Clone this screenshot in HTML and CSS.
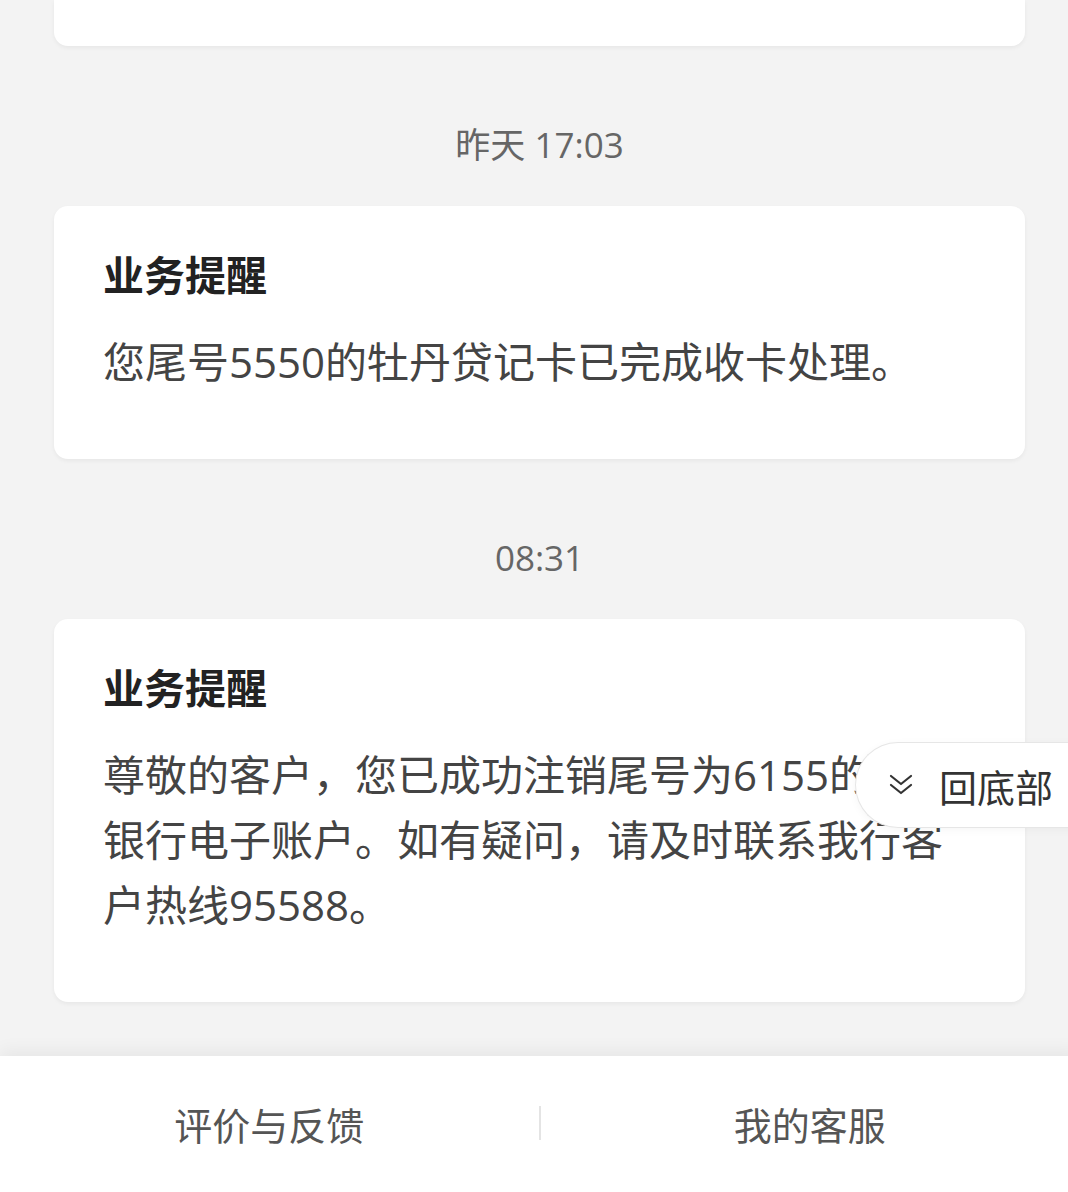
FILE: index.html
```html
<!DOCTYPE html>
<html lang="zh-CN">
<head>
    <meta charset="UTF-8">
    <meta name="viewport" content="width=device-width, initial-scale=1.0">
    <title>业务提醒</title>
    <link rel="stylesheet" href="styles.css">
</head>
<body>

<div class="page">
    <div class="msg-list">
        <div class="card card-cut"></div>

        <div class="time">昨天 17:03</div>
        <div class="card">
            <div class="card-title">业务提醒</div>
            <div class="card-text">您尾号5550的牡丹贷记卡已完成收卡处理。</div>
        </div>

        <div class="time">08:31</div>
        <div class="card">
            <div class="card-title">业务提醒</div>
            <div class="card-text">尊敬的客户，您已成功注销尾号为6155的工商银行电子账户。如有疑问，请及时联系我行客户热线95588。</div>
        </div>
    </div>

    <!-- 回底部 -->
    <div class="to-bottom">
        <svg class="to-bottom-icon" width="28" height="24" viewBox="0 0 28 24">
            <path d="M4 3 L14 11 L24 3 M4 12 L14 20 L24 12" fill="none" stroke="#333" stroke-width="2.2" stroke-linecap="round" stroke-linejoin="round"/>
        </svg>
        <span>回底部</span>
    </div>

    <div class="footer">
        <div class="footer-item">评价与反馈</div>
        <div class="footer-line"></div>
        <div class="footer-item">我的客服</div>
    </div>
</div>

</body>
</html>
```

FILE: styles.css
```css
body {
    margin: 0;
    background-color: #f3f3f3;
    font-family: "Open Sans", "Noto Sans CJK SC", sans-serif;
    color: #333;
    overflow: hidden;
}

.page {
    position: relative;
    width: 1079px;
    height: 100vh;
    display: flex;
    flex-direction: column;
    overflow: hidden;
}

.msg-list {
    flex: 1;
    padding: 0 54px;
    overflow: hidden;
}

.card {
    background: white;
    border-radius: 14px;
    box-shadow: 0 2px 4px rgba(0, 0, 0, 0.05);
    padding: 41px 52px 65px 49px;
}

.card-cut {
    height: 46px;
    padding: 0;
    border-radius: 0 0 14px 14px;
}

.time {
    margin: 79px 0 41px;
    height: 40px;
    line-height: 40px;
    text-align: center;
    font-size: 35px;
    color: #666;
}

.card-title {
    font-size: 41px;
    line-height: 56px;
    font-weight: 700;
    color: #222;
    margin-bottom: 26px;
}

.card-text {
    font-size: 42px;
    line-height: 65px;
    color: #444;
}

.to-bottom {
    position: absolute;
    left: 855px;
    top: 742px;
    width: 260px;
    height: 86px;
    box-sizing: border-box;
    display: flex;
    align-items: center;
    gap: 24px;
    padding-left: 31px;
    background: white;
    border: 1px solid #e6e6e6;
    border-right: none;
    border-radius: 43px 0 0 43px;
    box-shadow: 0 2px 8px rgba(0, 0, 0, 0.04);
    font-family: "Noto Sans CJK SC", sans-serif;
    font-size: 38px;
    color: #333;
}

.to-bottom-icon {
    display: block;
}

.footer {
    height: 134px;
    flex-shrink: 0;
    background: white;
    box-shadow: 0 -6px 16px rgba(0, 0, 0, 0.05);
    display: flex;
    align-items: center;
    padding-bottom: 2px;
}

.footer-item {
    flex: 1;
    text-align: center;
    font-size: 38px;
    color: #555;
}

.footer-line {
    width: 2px;
    height: 34px;
    background: #e4e4e4;
}
```
